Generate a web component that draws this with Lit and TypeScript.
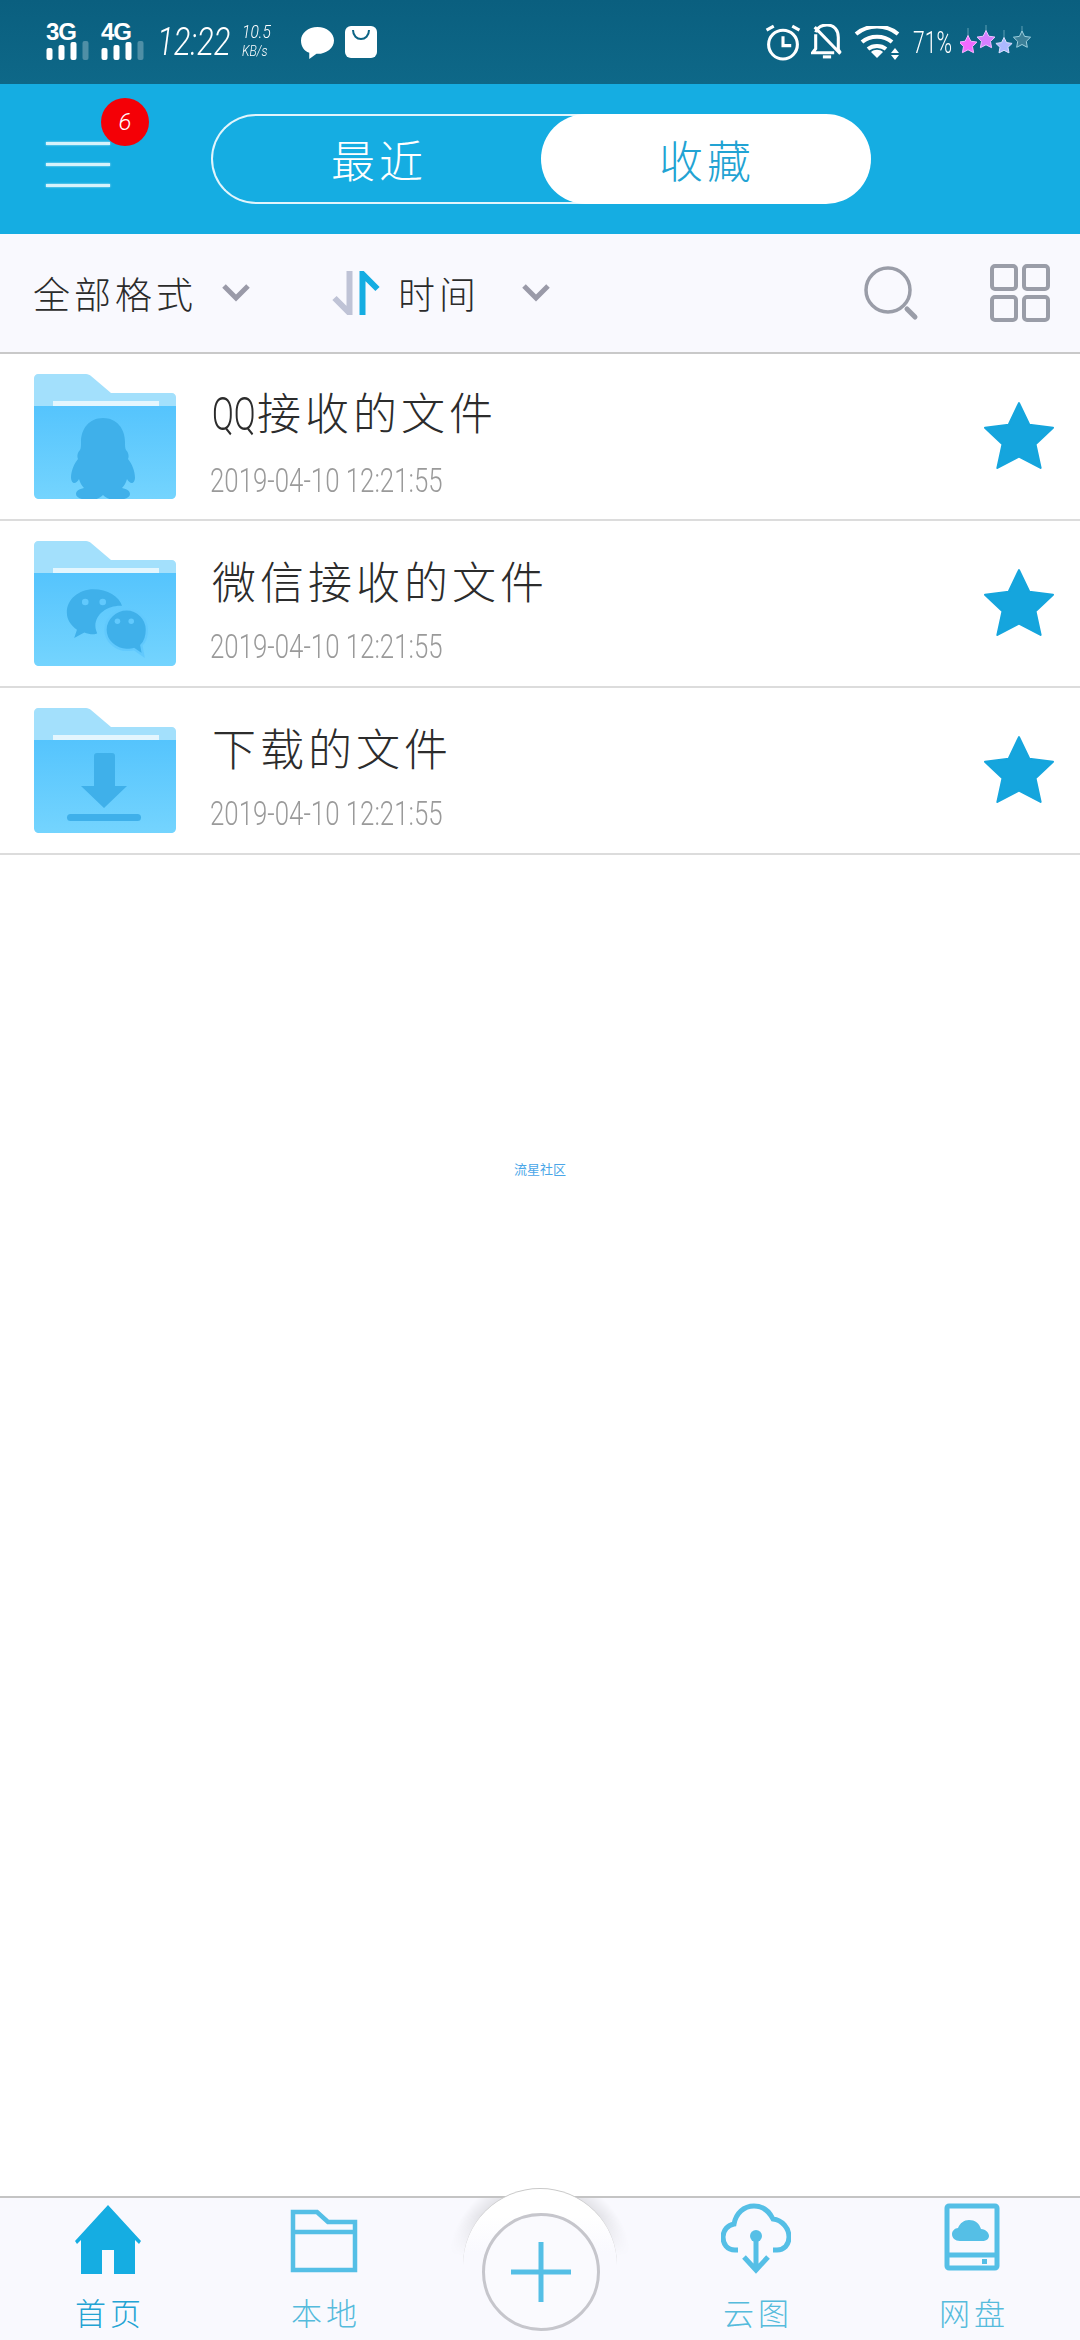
import { LitElement, html, css, svg } from 'lit';
import { customElement } from 'lit/decorators.js';

const FILES = [
  { prefix: 'QQ', name: '接收的文件', date: '2019-04-10 12:21:55', glyph: 'qq' },
  { prefix: '', name: '微信接收的文件', date: '2019-04-10 12:21:55', glyph: 'wechat' },
  { prefix: '', name: '下载的文件', date: '2019-04-10 12:21:55', glyph: 'download' },
];

const TINT = '#3fb0ea';

const glyphs: Record<string, unknown> = {
  qq: svg`<g fill=${TINT} transform="translate(4 0)">
    <path d="M65 44c-14 0-22 11-22 24 0 4 0 6-1 8-3 3-3 7-2 9-4 5-7 12-7 19 0 3 2 5 3 5 2 0 4-2 5-4 1 4 3 7 5 9-5 1-8 3-8 6 0 4 7 6 14 6 6 0 10-2 13-5 3 3 7 5 13 5 7 0 14-2 14-6 0-3-3-5-8-6 2-2 4-5 5-9 1 2 3 4 5 4 1 0 3-2 3-5 0-7-3-14-7-19 1-2 1-6-2-9-1-2-1-4-1-8 0-13-8-24-22-24z"/>
  </g>`,
  wechat: svg`<g transform="translate(8 4) scale(.92)">
    <path fill=${TINT} d="M56 48c-16 0-29 11-29 25 0 8 4 14 11 19l-3 9 11-6c3 1 6 2 10 2 1 0 3 0 4-1-1-3-2-5-2-8 0-13 13-22 27-22h2c-3-10-16-18-31-18z"/>
    <circle cx="47" cy="62" r="3.6" fill="#61c9fd"/><circle cx="66" cy="62" r="3.6" fill="#61c9fd"/>
    <path fill=${TINT} stroke="#61c9fd" stroke-width="2.5" d="M114 92c0-12-10-22-22-22s-23 10-23 22 11 22 23 22c3 0 6 0 8-1l10 7-2-11c4-4 6-10 6-17z"/>
    <circle cx="82" cy="83" r="3" fill="#61c9fd"/><circle cx="97" cy="83" r="3" fill="#61c9fd"/>
  </g>`,
  download: svg`<g fill=${TINT}>
    <path d="M60 48c0-2 1-3 3-3h15c2 0 3 1 3 3v30h12L70 100 47 78h13z"/>
    <rect x="33" y="106" width="74" height="7" rx="3.5"/>
  </g>`,
};

@customElement('app-root')
export class AppRoot extends LitElement {
  static styles = css`
    :host {
      display: block;
      width: 1080px;
      height: 2340px;
      background: #fff;
      position: relative;
      overflow: hidden;
      font-family: "Noto Sans CJK SC", "Noto Sans", sans-serif;
      font-weight: 300;
    }
    .page {
      height: 2340px;
      display: flex;
      flex-direction: column;
    }

    /* status bar */
    .status {
      height: 84px;
      flex: none;
      background: linear-gradient(#0a5f7f, #0e6888);
      display: flex;
      align-items: flex-start;
      justify-content: space-between;
      padding: 0 48px 0 46px;
      color: #fff;
      box-sizing: border-box;
    }
    .status-left, .status-right {
      display: flex;
      align-items: flex-start;
    }
    .signal {
      width: 43px;
      margin-top: 22px;
      margin-right: 12px;
    }
    .signal b {
      display: block;
      font: 700 24px/20px "Liberation Sans", sans-serif;
      letter-spacing: -1px;
      height: 19px;
    }
    .signal svg { display: block; margin-top: 0; }
    .clock {
      font: 300 38px/42px Roboto, sans-serif;
      font-style: italic;
      margin-top: 21px;
      margin-left: 1px;
      width: 73px;
      white-space: nowrap;
      transform: scaleX(.82);
      transform-origin: left center;
    }
    .speed {
      margin-left: 12px;
      margin-top: 22px;
      width: 32px;
      font: 300 15px/18px Roboto, sans-serif;
      font-style: italic;
      white-space: nowrap;
      transform: scaleX(.82);
      transform-origin: left center;
    }
    .speed div:first-child { font-size: 19px; line-height: 20px; }
    .msg { margin-left: 27px; margin-top: 26px; display: block; }
    .bag { margin-left: 11px; margin-top: 26px; display: block; }
    .status-right svg { display: block; }
    .alarm { margin-top: 24px; }
    .bell { margin: 24px 0 0 10px; }
    .wifi { margin: 26px 0 0 10px; }
    .pct {
      font: 300 31px/36px Roboto, sans-serif;
      margin-top: 25px;
      margin-left: 12px;
      width: 35px;
      white-space: nowrap;
      transform: scaleX(.68);
      transform-origin: left center;
    }
    .stars { margin: 24px 0 0 12px; }

    /* header */
    .header {
      height: 150px;
      flex: none;
      background: #15ade2;
      display: flex;
      align-items: flex-start;
      position: relative;
    }
    .menu {
      margin: 58px 0 0 46px;
      width: 64px;
      display: flex;
      flex-direction: column;
      gap: 18px;
    }
    .menu i {
      display: block;
      height: 3px;
      background: #d6f2fb;
      box-shadow: 0 0 2px #d6f2fb;
    }
    .badge {
      position: absolute;
      left: 101px;
      top: 14px;
      width: 48px;
      height: 48px;
      border-radius: 50%;
      background: #f40006;
      color: #fff;
      font: 300 24px/48px Roboto, sans-serif;
      font-style: italic;
      text-align: center;
    }
    .tabs {
      margin: 30px 0 0 101px;
      width: 660px;
      height: 90px;
      box-sizing: border-box;
      display: flex;
      border-radius: 45px;
      position: relative;
    }
    .tab {
      width: 330px;
      height: 90px;
      box-sizing: border-box;
      display: flex;
      align-items: center;
      justify-content: center;
      font-size: 44px;
      letter-spacing: 4px;
      border-radius: 45px;
    }
    .tab.off {
      color: #fff;
      border: 2px solid #e2f5fc;
      border-right: none;
      border-radius: 45px 0 0 45px;
      width: 400px;
      padding-right: 66px;
    }
    .tab.on {
      color: #22a3d3;
      background: #fff;
      margin-left: -70px;
      padding-left: 2px;
    }

    /* filter bar */
    .filter {
      height: 120px;
      flex: none;
      box-sizing: border-box;
      background: #f9f9fe;
      border-bottom: 2px solid #c9c9c9;
      display: flex;
      align-items: center;
      color: #2b2b2b;
      font-size: 37px;
      letter-spacing: 4px;
      padding: 0 0 0 33px;
    }
    .filter .fmt { width: 147px; white-space: nowrap; }
    .chev { display: block; margin-left: 41px; }
    .sort { display: block; margin-left: 80px; }
    .when { margin-left: 16px; width: 76px; white-space: nowrap; }
    .when + .chev { margin-left: 47px; }
    .lens { display: block; margin-left: 312px; }
    .grid { display: block; margin-left: 71px; }

    /* rows */
    .row {
      height: 167px;
      flex: none;
      box-sizing: border-box;
      border-bottom: 2px solid #dcdcdc;
      display: flex;
      align-items: center;
      padding-left: 34px;
    }
    .folder { display: block; flex: none; margin-top: -1px; }
    .info { margin-left: 36px; flex: 1; padding-top: 10px; }
    .name {
      font-size: 44px;
      line-height: 52px;
      letter-spacing: 4px;
      color: #2c2c2c;
      white-space: nowrap;
    }
    .qq {
      display: inline-block;
      width: 45px;
      font: 300 46px/52px Roboto, sans-serif;
      letter-spacing: 0;
      transform: scaleX(.7);
      transform-origin: left center;
    }
    .date {
      font: 300 34px/36px Roboto, sans-serif;
      color: #9a9a9a;
      margin-top: 22px;
      margin-left: -2px;
      white-space: nowrap;
      transform: scaleX(.76);
      transform-origin: left center;
    }
    .star { display: block; margin: -4px 26px 0 0; flex: none; }

    .watermark {
      flex: none;
      margin-top: 306px;
      text-align: center;
      font-size: 13px;
      line-height: 16px;
      color: #4aa6e8;
      font-weight: 400;
    }
    .spacer { flex: 1; }

    /* bottom nav */
    .nav {
      height: 144px;
      flex: none;
      box-sizing: border-box;
      border-top: 2px solid #c4c4c4;
      background: #f9f9fe;
      display: flex;
      position: relative;
    }
    .nav-item {
      position: relative;
      display: flex;
      flex-direction: column;
      align-items: center;
      width: 216px;
      color: #55bbdc;
      font-size: 31px;
      letter-spacing: 4px;
      line-height: 40px;
    }
    .nav-item.active { color: #22a3d3; }
    .nav-item svg { display: block; height: 72px; margin-top: 5px; }
    .nav-item span { display: block; margin-top: 17px; padding-left: 4px; }
    .shade {
      position: absolute;
      left: 440px;
      top: 0;
      width: 200px;
      height: 58px;
      background: radial-gradient(circle at 100px 67px, rgba(0, 0, 0, .09) 76px, rgba(0, 0, 0, 0) 92px);
      -webkit-mask-image: linear-gradient(#000 30%, transparent 100%);
      mask-image: linear-gradient(#000 30%, transparent 100%);
    }
    .hump {
      position: absolute;
      left: 462px;
      top: -10px;
      width: 156px;
      height: 80px;
      overflow: hidden;
    }
    .hump::before {
      content: "";
      position: absolute;
      left: 1px;
      top: 0;
      width: 154px;
      height: 154px;
      border-radius: 50%;
      box-sizing: border-box;
      border-top: 1.5px solid #c9c9c9;
      background: linear-gradient(#fff 18%, #f9f9fe 42%);
    }
    .add {
      position: absolute;
      left: 482px;
      top: 15px;
      width: 118px;
      height: 118px;
      box-sizing: border-box;
      border-radius: 50%;
      border: 3px solid #c6c6cc;
      background: #fafafe;
      display: flex;
      align-items: center;
      justify-content: center;
    }
  `;

  render() {
    return html`
      <div class="page">
        <div class="status">
          <div class="status-left">
            ${this.signal('3G')}
            ${this.signal('4G')}
            <div class="clock">12:22</div>
            <div class="speed"><div>10.5</div><div>KB/s</div></div>
            <svg class="msg" width="33" height="33" viewBox="0 0 32 32" fill="#fff">
              <path d="M16 1C7 1 0 7 0 14c0 6 3 10 8 12l0 6 7-5h1c9 0 16-6 16-13S25 1 16 1z"/>
            </svg>
            <svg class="bag" width="32" height="32" viewBox="0 0 32 32">
              <rect width="32" height="32" rx="6" fill="#fff"/>
              <path d="M8 4c0 12 16 12 16 0" fill="none" stroke="#0c6485" stroke-width="2"/>
            </svg>
          </div>
          <div class="status-right">
            <svg class="alarm" width="36" height="37" viewBox="0 0 34 36" fill="none" stroke="#fff" stroke-width="3">
              <circle cx="17" cy="20" r="14"/><path d="M17 12v9h8M1 6l7-4M33 6l-7-4"/>
            </svg>
            <svg class="bell" width="32" height="37" viewBox="0 0 30 36" fill="none" stroke="#fff" stroke-width="3">
              <path d="M4 8c2-5 6-7 11-7 7 0 11 5 11 12v12l2 3M4 10v14l-3 4h21M3 3l25 26"/><path d="M11 32h8"/>
            </svg>
            <svg class="wifi" width="48" height="34" viewBox="0 0 46 34" fill="#fff">
              <path fill="none" stroke="#fff" stroke-width="4" d="M2 8c12-10 30-10 42 0M8 16c8-7 22-7 30 0M14 23c5-4 13-4 18 0"/>
              <path d="M23 32l-6-6c3-3 9-3 12 0z"/>
              <path d="M40 22l4 5h-8zM40 34l4-5h-8z" transform="translate(1 0)"/>
            </svg>
            <div class="pct">71%</div>
            <svg class="stars" width="72" height="34" viewBox="0 0 72 34">
              <g stroke="#5f9fb4" stroke-width="1"><path d="M8 4v12M26 1v10M44 6v10M62 2v10"/></g>
              ${this.tinyStar(8, 21, 9.5, '#f26aff', '#f8b7ff')}
              ${this.tinyStar(26, 16, 9.5, '#d57fff', '#ecc4ff')}
              ${this.tinyStar(44, 22, 8.5, '#acb8ff', '#dde1ff')}
              ${this.tinyStar(62, 16, 9, '#3b7f97', '#9fd0df')}
            </svg>
          </div>
        </div>

        <div class="header">
          <div class="menu"><i></i><i></i><i></i></div>
          <div class="badge">6</div>
          <div class="tabs">
            <div class="tab off">最近</div>
            <div class="tab on">收藏</div>
          </div>
        </div>

        <div class="filter">
          <div class="fmt">全部格式</div>
          ${this.chevron()}
          <svg class="sort" width="51" height="44" viewBox="0 0 48 44" fill="none" stroke-width="6">
            <path d="M17 0v42L2 27" stroke="#bfc3d6"/>
            <path d="M30 44V3l15 15" stroke="#15ade2"/>
          </svg>
          <div class="when">时间</div>
          ${this.chevron()}
          <svg class="lens" width="56" height="56" viewBox="0 0 56 56" fill="none">
            <circle cx="25" cy="25" r="22" stroke="#9a9da8" stroke-width="3.5"/>
            <path d="M44 44l8 8" stroke="#9a9da8" stroke-width="5" stroke-linecap="round"/>
          </svg>
          <svg class="grid" width="60" height="58" viewBox="0 0 60 58" fill="none" stroke="#9a9da8" stroke-width="4">
            <rect x="2" y="2" width="24" height="23" rx="3"/><rect x="34" y="2" width="24" height="23" rx="3"/>
            <rect x="2" y="33" width="24" height="23" rx="3"/><rect x="34" y="33" width="24" height="23" rx="3"/>
          </svg>
        </div>

        ${FILES.map((f) => html`
          <div class="row">
            ${this.folder(f.glyph)}
            <div class="info">
              <div class="name">${f.prefix ? html`<span class="qq">${f.prefix}</span>` : ''}${f.name}</div>
              <div class="date">${f.date}</div>
            </div>
            <svg class="star" width="70" height="68" viewBox="0 0 68 66">
              <path fill="#15a5dd" stroke="#15a5dd" stroke-width="2" stroke-linejoin="round" d="M34 2l10 21 23 3-17 16 5 23-21-11-21 11 5-23L1 26l23-3z"/>
            </svg>
          </div>
        `)}

        <div class="watermark">流星社区</div>
        <div class="spacer"></div>

        <div class="nav">
          <div class="shade"></div>
          <div class="hump"></div>
          <div class="nav-item active">
            <svg width="70" height="72" viewBox="0 0 70 72"><path fill="#15ade2" d="M35 2L2 38l2 3 4-4v34h21V47h12v24h21V37l4 4 2-3z"/></svg>
            <span>首页</span>
          </div>
          <div class="nav-item">
            <svg width="68" height="72" viewBox="0 0 68 72" fill="none" stroke="#55bfe6" stroke-width="4.5">
              <path d="M3 9h24l11 10h27v48H3zM3 29h62"/>
            </svg>
            <span>本地</span>
          </div>
          <div class="nav-item"></div>
          <div class="nav-item">
            <svg width="70" height="72" viewBox="0 0 70 72" fill="none" stroke="#55bfe6" stroke-width="5">
              <path d="M17 47H14C6 47 2 41 2 34s5-12 11-13C15 10 23 3 33 3c9 0 15 5 19 13 9 1 16 9 16 18 0 8-5 13-12 13h-4"/>
              <path d="M35 35v32M23 54l12 13 12-13"/>
              <circle cx="35" cy="33" r="6" fill="#55bfe6" stroke="none"/>
            </svg>
            <span>云图</span>
          </div>
          <div class="nav-item">
            <svg width="56" height="72" viewBox="0 0 56 72" fill="none" stroke="#55bfe6" stroke-width="5">
              <rect x="3" y="3" width="50" height="62" rx="2"/>
              <path d="M3 52h50"/>
              <path fill="#55bfe6" stroke="none" d="M16 38c-5 0-8-3-8-7 0-3 3-6 6-6 2-5 6-8 11-8 6 0 10 3 12 9 5 0 8 4 8 7 0 3-3 5-7 5z"/>
              <rect x="38" y="56" width="5" height="5" fill="#55bfe6" stroke="none"/>
            </svg>
            <span>网盘</span>
          </div>
          <div class="add">
            <svg width="60" height="60" viewBox="0 0 60 60"><path d="M30 0v60M0 30h60" stroke="#55bfe6" stroke-width="5"/></svg>
          </div>
        </div>
      </div>
    `;
  }

  signal(label: string) {
    return html`<div class="signal">
      <b>${label}</b>
      <svg width="43" height="20" viewBox="0 0 42 20">
        <rect x="0" y="7" width="6" height="12" rx="2" fill="#fff"/>
        <rect x="12" y="4" width="6" height="15" rx="2" fill="#fff"/>
        <rect x="24" y="1" width="6" height="18" rx="2" fill="#fff"/>
        <rect x="36" y="0" width="6" height="19" rx="2" fill="#4f8fa6"/>
      </svg>
    </div>`;
  }

  tinyStar(cx: number, cy: number, r: number, fill: string, line: string) {
    const pts: string[] = [];
    for (let i = 0; i < 10; i++) {
      const rad = i % 2 ? r * 0.5 : r;
      const a = -Math.PI / 2 + (i * Math.PI) / 5;
      pts.push(`${(cx + rad * Math.cos(a)).toFixed(1)},${(cy + rad * Math.sin(a)).toFixed(1)}`);
    }
    return svg`<polygon points=${pts.join(' ')} fill=${fill} stroke=${line} stroke-width="1"/>`;
  }

  chevron() {
    return html`<svg class="chev" width="30" height="18" viewBox="0 0 28 18" fill="none">
      <path d="M2 2l12 12L26 2" stroke="#9a9aa8" stroke-width="5"/>
    </svg>`;
  }

  folder(glyph: string) {
    const id = `f-${glyph}`;
    return html`<svg class="folder" width="142" height="125" viewBox="0 0 142 125">
      <defs>
        <linearGradient id=${id} x1="0" y1="0" x2="0" y2="1">
          <stop offset="0" stop-color="#55c4fd"/><stop offset="1" stop-color="#74d4fe"/>
        </linearGradient>
      </defs>
      <path fill="#a3e0fc" d="M4 0h48c2 0 4 1 5 2l20 17h61c2 0 4 2 4 4v30H0V4c0-2 2-4 4-4z"/>
      <rect x="19" y="27" width="106" height="5" fill="#e3f6fe"/>
      <path fill="url(#${id})" d="M0 32h142v88c0 3-2 5-5 5H5c-3 0-5-2-5-5z"/>
      ${glyphs[glyph]}
    </svg>`;
  }
}
